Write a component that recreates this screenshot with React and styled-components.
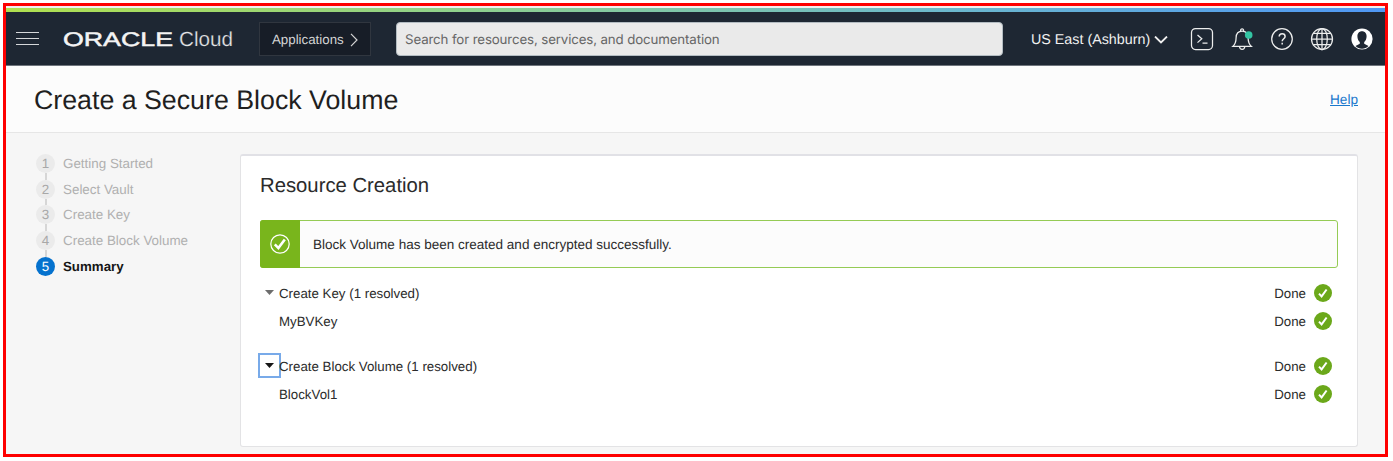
import React from "react";
import styled, { createGlobalStyle, css } from "styled-components";

const GlobalStyle = createGlobalStyle`
  * { box-sizing: border-box; }
  body {
    margin: 0;
    background: #fff;
    color: #2b2b2b;
    font-family: "Liberation Sans", Arial, sans-serif;
    font-size: 13.3px;
    text-rendering: geometricPrecision;
  }
`;

const Page = styled.div`
  height: 461px;
  padding: 3px 5px 4px 3px;
  overflow: hidden;
`;

const Frame = styled.div`
  height: 454px;
  border: 3px solid #fe0000;
  background: #f6f6f6;
  display: flex;
  flex-direction: column;
`;

const Stripe = styled.div`
  flex: none;
  height: 6px;
  border-top: 2px solid #f3efef;
  background: linear-gradient(90deg, #b0e04f 0%, #8fd08c 33%, #6cb8cc 68%, #4f97f5 100%);
`;

const TopBar = styled.header`
  flex: none;
  height: 54px;
  display: flex;
  align-items: center;
  background: #1e2733;
  border-bottom: 1px solid #6f757d;
  color: #f0f0f0;
`;

const MenuButton = styled.div`
  width: 23px;
  height: 13px;
  margin-left: 10px;
  border-top: 1px solid #d5d7da;
  border-bottom: 1px solid #d5d7da;
  display: flex;
  align-items: center;
`;

const MenuLine = styled.span`
  width: 100%;
  height: 1px;
  background: #d5d7da;
`;

const Brand = styled.svg`
  width: 174px;
  height: 26px;
  margin-left: 22px;
  overflow: visible;
`;

const AppsButton = styled.div`
  display: flex;
  align-items: center;
  gap: 6px;
  width: 112px;
  height: 34px;
  margin-left: 24px;
  padding: 2px 0 0 12px;
  border: 1px solid #30363f;
  background: #171d27;
  color: #d4d4d4;
`;

const SearchField = styled.div`
  width: 607px;
  height: 34px;
  margin-left: 25px;
  padding-left: 8px;
  border: 1px solid #b3bcc2;
  border-radius: 4px;
  background: #eaeaea;
  color: #666;
  font: 13.3px/34px Inter, sans-serif;
  letter-spacing: -0.135px;
`;

const Region = styled.div`
  display: flex;
  align-items: center;
  gap: 4px;
  width: 138px;
  margin-left: 28px;
  padding-top: 2px;
  font-size: 14.3px;
  white-space: nowrap;
`;

const Tools = styled.div`
  display: flex;
  gap: 16px;
  margin-left: 21.3px;
`;

const ToolIcon = styled.svg`
  width: 24px;
  height: 24px;
  fill: none;
  stroke: #eceded;
  stroke-width: 1.25;
`;

const TitleBar = styled.div`
  flex: none;
  height: 67px;
  display: flex;
  align-items: center;
  justify-content: space-between;
  padding: 0 27px 0 28px;
  background: #fcfcfc;
  border-bottom: 1px solid #e6e6e6;
`;

const Title = styled.h1`
  margin: 1px 0 0;
  font-size: 26.75px;
  font-weight: 400;
  line-height: 32px;
  color: #1f1f1f;
`;

const HelpLink = styled.a`
  font-size: 13.6px;
  color: #1a78cc;
  text-decoration: underline;
  text-underline-offset: 1px;
`;

const Body = styled.div`
  flex: 1;
  display: flex;
  min-height: 0;
`;

const Steps = styled.ol`
  flex: none;
  width: 234px;
  margin: 0;
  padding: 20.8px 0 0 30px;
  list-style: none;
`;

const Step = styled.li`
  display: flex;
  flex-direction: column;
  height: 25.8px;
  color: #b0b0b0;
  font-size: 13.4px;
  ${(p) => p.$current && css`
    color: #161616;
    font-size: 13.3px;
    font-weight: 700;
  `}
`;

const StepRow = styled.div`
  display: flex;
  align-items: center;
  gap: 8px;
  height: 19px;
`;

const StepNumber = styled.span`
  width: 19px;
  height: 19px;
  border-radius: 50%;
  background: ${(p) => (p.$current ? "#0572ce" : "#ebebeb")};
  color: ${(p) => (p.$current ? "#fff" : "#a8a8a8")};
  font-weight: 400;
  line-height: 20px;
  text-align: center;
`;

const StepLink = styled.span`
  width: 2px;
  flex: 1;
  margin-left: 9px;
  background: #d6d6d6;
`;

const Card = styled.section`
  width: 1118px;
  height: 293px;
  margin-top: 21px;
  padding: 17px 19px 0;
  border: 1px solid #e3e3e5;
  border-top: 2px solid #e1e1e6;
  border-radius: 3px;
  background: #fff;
`;

const CardTitle = styled.h2`
  margin: 0;
  padding-top: 1px;
  font-size: 20.3px;
  font-weight: 400;
  line-height: 24px;
`;

const Banner = styled.div`
  display: flex;
  align-items: center;
  height: 48px;
  margin-top: 22px;
  border: 1px solid #95cb55;
  border-radius: 3px;
  background: #fcfcfc;
`;

const BannerMark = styled.div`
  display: flex;
  align-items: center;
  justify-content: center;
  width: 40px;
  height: 48px;
  margin-left: -1px;
  border-radius: 3px 0 0 3px;
  background: #79b51c;
`;

const BannerText = styled.span`
  margin-left: 13px;
  font-size: 13.53px;
`;

const Group = styled.div`
  padding-top: ${(p) => (p.$first ? 11 : 17)}px;
`;

const Row = styled.div`
  display: flex;
  align-items: center;
  height: 28px;
  padding-right: 6px;
`;

const Toggle = styled.span`
  display: flex;
  align-items: center;
  justify-content: center;
  width: 23px;
  height: 25px;
  margin: 0 -2px 2px;
  border: 2px solid ${(p) => (p.$focused ? "#78aae9" : "transparent")};
  color: ${(p) => (p.$focused ? "#161616" : "#6d6d6d")};
`;

const Label = styled.span`
  flex: 1;
  margin-left: ${(p) => (p.$child ? 19 : 0)}px;
`;

const Status = styled.span`
  display: flex;
  align-items: center;
  gap: 8px;
`;

const Chevron = ({ down }) =>
  down ? (
    <svg width="14" height="8" fill="none" stroke="#f0f0f0" strokeWidth="1.8">
      <path d="M1 .5l6 6 6-6" />
    </svg>
  ) : (
    <svg width="8" height="14" fill="none" stroke="#d4d4d4" strokeWidth="1.2">
      <path d="M1 .8l6 6.2-6 6.2" />
    </svg>
  );

const DoneMark = () => (
  <svg width="18" height="18">
    <circle cx="9" cy="9" r="9" fill="#6ba81a" />
    <path d="M5 9.6l2.6 2.8L12.6 5.5" fill="none" stroke="#fff" strokeWidth="2" />
  </svg>
);

const ItemRow = ({ label, toggle, focused }) => (
  <Row>
    {toggle && (
      <Toggle $focused={focused}>
        <svg width="9" height="5">
          <path d="M0 0h9L4.5 5z" fill="currentColor" />
        </svg>
      </Toggle>
    )}
    <Label $child={!toggle}>{label}</Label>
    <Status>
      Done
      <DoneMark />
    </Status>
  </Row>
);

const steps = ["Getting Started", "Select Vault", "Create Key", "Create Block Volume", "Summary"];

export default function App() {
  return (
    <Page>
      <GlobalStyle />
      <Frame>
        <Stripe />
        <TopBar>
          <MenuButton><MenuLine /></MenuButton>
          <Brand>
            <text
              transform="translate(2 20)"
              fontSize="19.6"
              fontWeight="400"
              fill="#f4f4f4"
              stroke="#f4f4f4"
              strokeWidth=".5"
              textLength="110"
              lengthAdjust="spacingAndGlyphs"
            >
              ORACLE
            </text>
            <text
              x="118"
              y="19.8"
              fontSize="20.5"
              fontFamily="Liberation Sans"
              fill="#e2e4e6"
              stroke="#1e2733"
              strokeWidth=".25"
              textLength="54"
              lengthAdjust="spacingAndGlyphs"
            >
              Cloud
            </text>
          </Brand>
          <AppsButton>Applications <Chevron /></AppsButton>
          <SearchField>Search for resources, services, and documentation</SearchField>
          <Region>US East (Ashburn) <Chevron down /></Region>
          <Tools>
            <ToolIcon>
              <rect x="1.5" y="1.5" width="21" height="21" rx="4" />
              <path d="M7.5 8l4.3 3.8-4.3 3.8M12.5 16h5" />
            </ToolIcon>
            <ToolIcon>
              <path d="M2.8 19.4c2.4-2.2 3.3-4.2 3.3-8.7 0-4.2 2.3-6.7 6-6.7s6 2.5 6 6.7c0 4.5.9 6.5 3.3 8.7zM10.6 4c-.5-3 3.5-3 3 0M9.5 19.5c.3 3.8 5 3.8 5.3 0" />
              <circle cx="18.7" cy="8" r="3.8" fill="#33c4a3" stroke="none" />
            </ToolIcon>
            <ToolIcon>
              <circle cx="12" cy="12" r="10.3" />
              <path d="M9.2 9.6c0-3.7 5.9-3.6 5.9-.1 0 2.2-2.9 2.3-2.9 4.8M12.2 15.8v1.8" strokeWidth="1.5" />
            </ToolIcon>
            <ToolIcon>
              <circle cx="12" cy="12" r="10.5" />
              <ellipse cx="12" cy="12" rx="5.3" ry="10.5" />
              <path d="M12 1.5v21M1.5 12h21M3.3 6.3h17.4M3.3 17.7h17.4" />
            </ToolIcon>
            <ToolIcon>
              <circle cx="12" cy="12" r="10.6" fill="#fff" stroke="none" />
              <path
                d="M12 4.2c-3 0-4.6 2.2-4.6 5.1 0 2.5 1 4.6 2.4 5.7v1.8l-4.3 2.1c3.4 3.7 9.6 3.7 13 0l-4.3-2.1V15c1.4-1.1 2.4-3.2 2.4-5.7 0-2.9-1.6-5.1-4.6-5.1z"
                fill="#1e2733"
                stroke="none"
              />
              <path d="M12 6c-2 0-3 1.500-3 3.500 0 2.800 1.300 5 3 5s3-2.200 3-5c0-2-1-3.500-3-3.500z" fill="#1e2733" stroke="none" />
            </ToolIcon>
          </Tools>
        </TopBar>
        <TitleBar>
          <Title>Create a Secure Block Volume</Title>
          <HelpLink>Help</HelpLink>
        </TitleBar>
        <Body>
          <Steps>
            {steps.map((name, i) => {
              const current = i === steps.length - 1;
              return (
                <Step key={name} $current={current}>
                  <StepRow>
                    <StepNumber $current={current}>{i + 1}</StepNumber>
                    {name}
                  </StepRow>
                  {!current && <StepLink />}
                </Step>
              );
            })}
          </Steps>
          <Card>
            <CardTitle>Resource Creation</CardTitle>
            <Banner>
              <BannerMark>
                <svg width="20" height="20" fill="none" stroke="#fff">
                  <circle cx="10" cy="10" r="9.2" strokeWidth="1.2" />
                  <path d="M4.8 10.4l3.6 3.7 6.4-8.6" strokeWidth="2.6" />
                </svg>
              </BannerMark>
              <BannerText>Block Volume has been created and encrypted successfully.</BannerText>
            </Banner>
            <Group $first>
              <ItemRow label="Create Key (1 resolved)" toggle />
              <ItemRow label="MyBVKey" />
            </Group>
            <Group>
              <ItemRow label="Create Block Volume (1 resolved)" toggle focused />
              <ItemRow label="BlockVol1" />
            </Group>
          </Card>
        </Body>
      </Frame>
    </Page>
  );
}
